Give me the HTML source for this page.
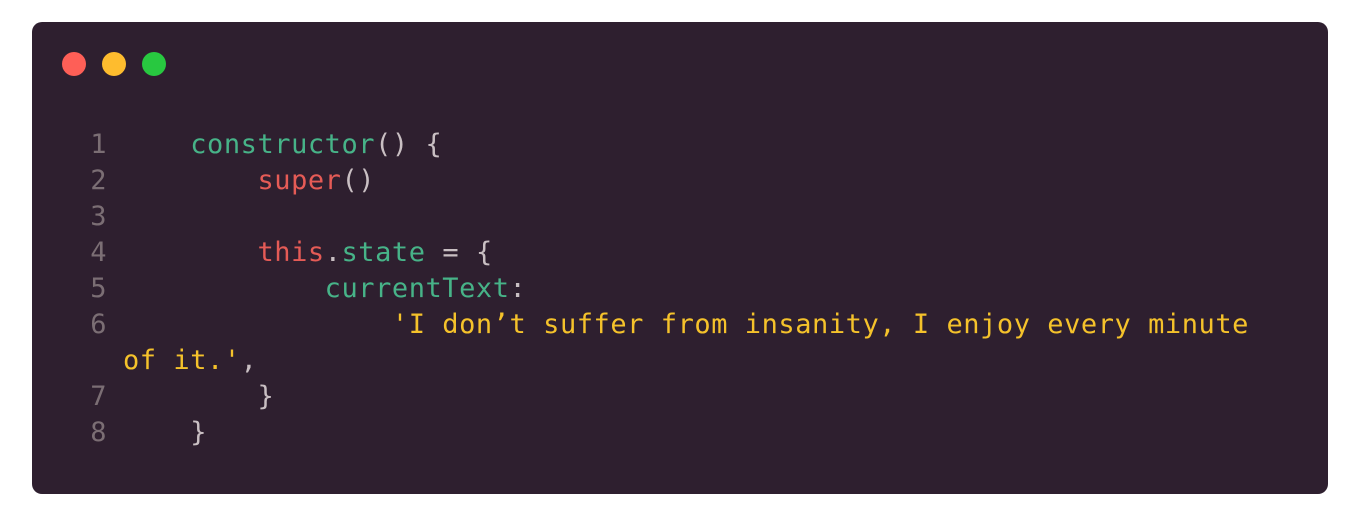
<!DOCTYPE html>
<html><head><meta charset="utf-8"><style>
html,body{margin:0;padding:0;background:#fff;width:1360px;height:516px;overflow:hidden}
.card{position:absolute;left:32px;top:22px;width:1296px;height:472px;background:#2e1f2f;border-radius:10px}
.dot{position:absolute;top:52px;width:24px;height:24px;border-radius:50%}
.l{position:absolute;left:0;height:36px;line-height:36px;font-family:"DejaVu Sans Mono","Liberation Mono",monospace;font-size:27px;letter-spacing:0.55px;white-space:pre;color:#c9bfc3}
.n{position:absolute;width:107px;text-align:right;color:#7b6e74;left:0}
.c{position:absolute;left:123px}
.g{color:#47b388}.r{color:#e55b56}.y{color:#f5c22b}
</style></head><body>
<div class="card"></div>
<div class="dot" style="left:62px;background:#fe5f57"></div>
<div class="dot" style="left:102px;background:#febc2e"></div>
<div class="dot" style="left:142px;background:#28c840"></div>
<div class="l" style="top:127px"><span class="n">1</span><span class="c">    <span class="g">constructor</span>() {</span></div>
<div class="l" style="top:163px"><span class="n">2</span><span class="c">        <span class="r">super</span>()</span></div>
<div class="l" style="top:199px"><span class="n">3</span></div>
<div class="l" style="top:235px"><span class="n">4</span><span class="c">        <span class="r">this</span>.<span class="g">state</span> = {</span></div>
<div class="l" style="top:271px"><span class="n">5</span><span class="c">            <span class="g">currentText</span>:</span></div>
<div class="l" style="top:307px"><span class="n">6</span><span class="c">                <span class="y">'I don’t suffer from insanity, I enjoy every minute</span></span></div>
<div class="l" style="top:343px"><span class="c"><span class="y">of it.'</span>,</span></div>
<div class="l" style="top:379px"><span class="n">7</span><span class="c">        }</span></div>
<div class="l" style="top:415px"><span class="n">8</span><span class="c">    }</span></div>
</body></html>
